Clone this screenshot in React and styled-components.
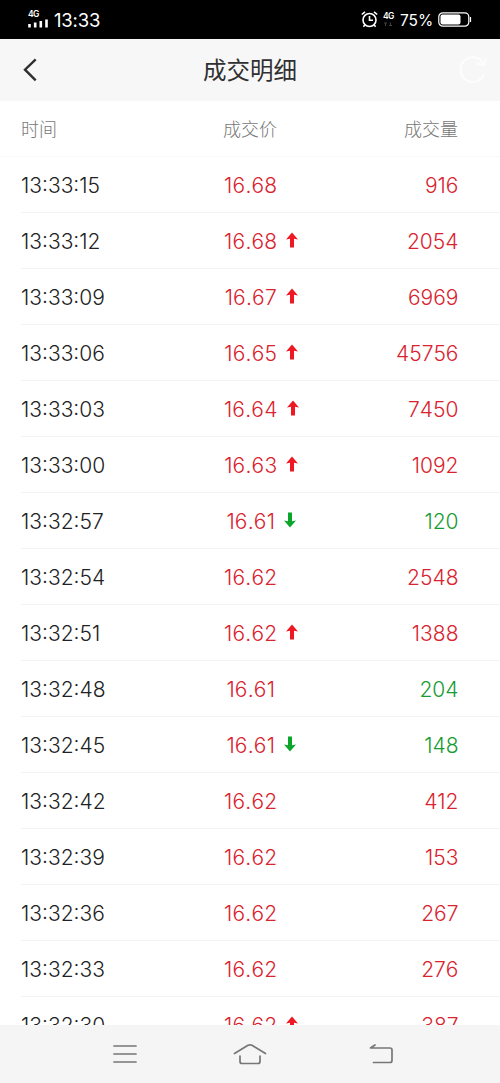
import React from "react";
import styled, { createGlobalStyle } from "styled-components";

const Global = createGlobalStyle`
  * { box-sizing: border-box; }
  body { margin: 0; background: #fff; }
`;

const Screen = styled.div`
  display: flex;
  flex-direction: column;
  width: 500px;
  height: 1083px;
  overflow: hidden;
  background: #fff;
  font-family: Inter, "Noto Sans CJK SC", sans-serif;
`;

const StatusBar = styled.header`
  display: flex;
  justify-content: space-between;
  flex: 0 0 39px;
  padding: 0 28px 0 28px;
  background: #000;
  color: #fff;
`;

const StatusGroup = styled.div`
  display: flex;
  align-items: center;
  height: 39px;
`;

const Signal = styled.div`
  display: flex;
  flex-direction: column;
  width: 21px;
  margin: -2px 5px 0 0;
`;

const NetLabel = styled.span`
  font-size: 8.5px;
  line-height: 9px;
  font-weight: 600;
  letter-spacing: -0.6px;
`;

const Clock = styled.span`
  padding-top: 1px;
  font-size: 18.5px;
  line-height: 22px;
  letter-spacing: -0.2px;
`;

const NetStack = styled.div`
  display: flex;
  flex-direction: column;
  width: 12px;
  margin: 0 5px 0 5px;
`;

const Battery = styled.span`
  width: 38px;
  padding-top: 2px;
  font-size: 15.5px;
  line-height: 20px;
`;

const TitleBar = styled.div`
  display: grid;
  grid-template-columns: 60px 1fr 60px;
  align-items: center;
  flex: 0 0 62px;
  background: #f7f7f7;
`;

const Title = styled.h1`
  margin: 0;
  padding-top: 2px;
  text-align: center;
  font-size: 23.5px;
  line-height: 34px;
  font-weight: 400;
  color: #303030;
`;

const Icon = styled.svg`
  display: block;
  flex: none;
  fill: none;
  overflow: visible;
`;

const BackIcon = styled(Icon)`
  margin-left: 22px;
`;

const RefreshIcon = styled(Icon)`
  margin-left: 18px;
`;

const columns = `
  display: grid;
  grid-template-columns: 160px 1fr 160px;
  align-items: center;
`;

const Headings = styled.div`
  ${columns}
  flex: 0 0 56px;
  padding: 0 42px 2px 21px;
  border-bottom: 1px solid #f8f8f8;
  font-size: 18px;
  font-weight: 300;
  color: #777;
`;

const Heading = styled.span`
  text-align: ${(p) => p.$align || "left"};
  ${(p) => p.$align === "center" && "padding-left: 21px;"}
`;

const List = styled.main`
  flex: 1;
  min-height: 0;
  overflow: hidden;
  padding-left: 21px;
`;

const Row = styled.div`
  ${columns}
  height: 56px;
  padding: 2px 41.5px 0 0;
  border-bottom: 1px solid #f4f4f4;
  font-size: 21px;
  line-height: 28px;
  font-weight: 300;
  font-kerning: none;
`;

const Time = styled.span`
  color: #222;
`;

const Price = styled.span`
  display: flex;
  justify-content: center;
  align-items: center;
  padding-left: 22px;
  letter-spacing: 0.2px;
  color: #d9232e;
`;

const ArrowSlot = styled.span`
  width: 0;
`;

const Arrow = styled(Icon)`
  margin: -3px 0 0 9px;
  fill: ${(p) => (p.$down ? "#0aa629" : "#ee1722")};
`;

const Volume = styled.span`
  text-align: right;
  color: ${(p) => (p.$down ? "#179b32" : "#d9232e")};
`;

const NavBar = styled.nav`
  display: grid;
  grid-template-columns: repeat(3, 128px);
  justify-content: center;
  justify-items: center;
  flex: 0 0 58px;
  padding: 18px 0 0 0;
  background: #f5f5f5;
`;

const MenuIcon = styled(Icon)`
  margin-left: 6px;
`;

const ReturnIcon = styled(Icon)`
  margin-left: 6px;
`;

const trades = [
  ["13:33:15", "16.68", "", "916"],
  ["13:33:12", "16.68", "up", "2054"],
  ["13:33:09", "16.67", "up", "6969"],
  ["13:33:06", "16.65", "up", "45756"],
  ["13:33:03", "16.64", "up", "7450"],
  ["13:33:00", "16.63", "up", "1092"],
  ["13:32:57", "16.61", "down", "120", true],
  ["13:32:54", "16.62", "", "2548"],
  ["13:32:51", "16.62", "up", "1388"],
  ["13:32:48", "16.61", "", "204", true],
  ["13:32:45", "16.61", "down", "148", true],
  ["13:32:42", "16.62", "", "412"],
  ["13:32:39", "16.62", "", "153"],
  ["13:32:36", "16.62", "", "267"],
  ["13:32:33", "16.62", "", "276"],
  ["13:32:30", "16.62", "up", "387"],
];

function Trade({ time, price, move, volume, sell }) {
  return (
    <Row>
      <Time>{time}</Time>
      <Price>
        {price}
        <ArrowSlot>
          {move && (
            <Arrow width="12" height="16" viewBox="0 0 12 16" $down={move === "down"}>
              <path
                d={
                  move === "down"
                    ? "M4 0.5H8V9.2L12 8.5L6 15.5L0 8.5L4 9.2Z"
                    : "M4 15.5H8V6.8L12 7.5L6 0.5L0 7.5L4 6.8Z"
                }
              />
            </Arrow>
          )}
        </ArrowSlot>
      </Price>
      <Volume $down={sell}>{volume}</Volume>
    </Row>
  );
}

export default function App() {
  return (
    <Screen>
      <Global />
      <StatusBar>
        <StatusGroup>
          <Signal>
            <NetLabel>4G</NetLabel>
            <Icon width="21" height="9" viewBox="0 0 21 9" fill="none">
              <path d="M1.5 8.5V5M7.2 8.5V3.5M12.8 8.5V2M18.5 8.5V0.5" stroke="#fff" strokeWidth="2.6" />
            </Icon>
          </Signal>
          <Clock>13:33</Clock>
        </StatusGroup>
        <StatusGroup>
          <Icon width="17" height="17" viewBox="0 0 17 17" stroke="#fff" strokeWidth="1.6">
            <circle cx="8.5" cy="9" r="6.5" />
            <path d="M8.5 5V9.3H12M0.8 3.5L4 0.8M13 0.8L16.2 3.5M4 13.8L2.4 15.8M13 13.8L14.6 15.8" />
          </Icon>
          <NetStack>
            <NetLabel>4G</NetLabel>
            <Icon width="10" height="7" viewBox="0 0 10 7" fill="none" stroke="#444" strokeWidth="1">
              <path d="M1 2H4M2.5 2V5M6 4.5H9M7.5 1.5V4.5" />
            </Icon>
          </NetStack>
          <Battery>75%</Battery>
          <Icon width="34" height="15" viewBox="0 0 34 15">
            <rect x="0.8" y="0.8" width="30" height="13.4" rx="4" stroke="#fff" strokeWidth="1.2" />
            <rect x="2.5" y="2.5" width="20" height="10" rx="2" fill="#fff" />
            <path d="M32.5 5V10" stroke="#fff" strokeWidth="1.2" />
          </Icon>
        </StatusGroup>
      </StatusBar>
      <TitleBar>
        <BackIcon width="16" height="24" viewBox="0 0 16 24">
          <path d="M13.7 1.3L3 11.7L13.7 22.3" stroke="#303030" strokeWidth="2.4" />
        </BackIcon>
        <Title>成交明细</Title>
        <RefreshIcon width="30" height="28" viewBox="0 0 30 28" stroke="#fdfdfd" strokeWidth="2">
          <path d="M24.5 6.2A12.3 12.3 0 1 0 26 18.5M28.5 2.5L25.5 9L18.5 7.5" />
        </RefreshIcon>
      </TitleBar>
      <Headings>
        <Heading>时间</Heading>
        <Heading $align="center">成交价</Heading>
        <Heading $align="right">成交量</Heading>
      </Headings>
      <List>
        {trades.map(([time, price, move, volume, sell]) => (
          <Trade key={time} time={time} price={price} move={move} volume={volume} sell={sell} />
        ))}
      </List>
      <NavBar>
        <MenuIcon width="24" height="20" viewBox="0 0 24 20" stroke="#777" strokeWidth="1.7" strokeLinecap="round">
          <path d="M1 3H23M1 11H23M1 19H23" />
        </MenuIcon>
        <Icon width="34" height="22" viewBox="0 0 34 22" stroke="#777" strokeWidth="1.7" strokeLinecap="round" strokeLinejoin="round">
          <path d="M1.5 10.5L15 2.3Q17 1.3 19 2.3L32.5 10.5M7 13V18.5Q7 20.5 9 20.5H25Q27 20.5 27 18.5V13" />
        </Icon>
        <ReturnIcon width="24" height="22" viewBox="0 0 24 22" stroke="#777" strokeWidth="1.7" strokeLinecap="round" strokeLinejoin="round">
          <path d="M6 2L1.5 5H21Q23 5 23 7V17.5Q23 19.5 21 19.5H4.5" />
        </ReturnIcon>
      </NavBar>
    </Screen>
  );
}
